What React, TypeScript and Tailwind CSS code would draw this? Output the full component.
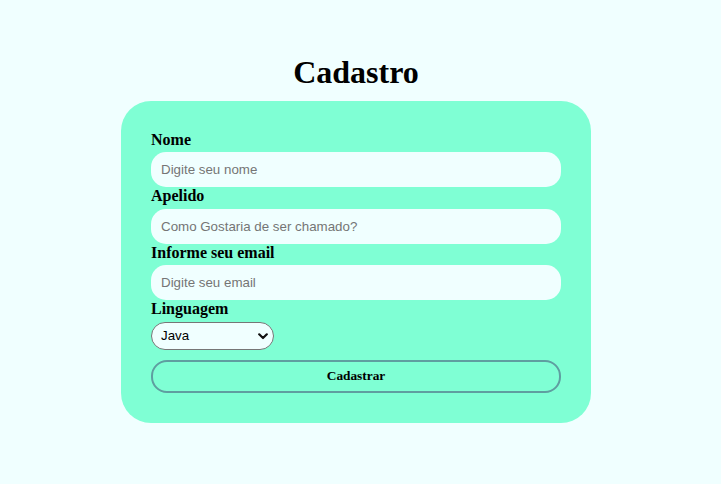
import React from "react";

export default function App() {
  return (
    <div className="min-h-[484px] w-full bg-[#f0ffff]" style={{ fontFamily: '"Liberation Serif", "Times New Roman", serif' }}>
      <div className="w-[712px] flex flex-col items-center pt-[54px]">
        <h1 className="text-[32px] font-bold leading-[37px] text-black">Cadastro</h1>
        <form
          className="mt-[10px] w-[470px] bg-[#7fffd4] rounded-[30px] px-[30px] pt-[30px] pb-[30px] flex flex-col"
          onSubmit={(e) => e.preventDefault()}
        >
          <label className="block text-[16px] font-bold leading-[18.4px] text-black">Nome</label>
          <input
            type="text"
            placeholder="Digite seu nome"
            className="mt-[3px] h-[35px] w-[410px] rounded-[15px] bg-[#f0ffff] px-[10px] text-[13.33px] text-black placeholder:text-[#757575] outline-none"
            style={{ fontFamily: '"Liberation Sans", Arial, sans-serif' }}
          />
          <label className="block text-[16px] font-bold leading-[18.4px] text-black">Apelido</label>
          <input
            type="text"
            placeholder="Como Gostaria de ser chamado?"
            className="mt-[3px] h-[35px] w-[410px] rounded-[15px] bg-[#f0ffff] px-[10px] text-[13.33px] text-black placeholder:text-[#757575] outline-none"
            style={{ fontFamily: '"Liberation Sans", Arial, sans-serif' }}
          />
          <label className="block text-[16px] font-bold leading-[18.4px] text-black">Informe seu email</label>
          <input
            type="email"
            placeholder="Digite seu email"
            className="mt-[3px] h-[35px] w-[410px] rounded-[15px] bg-[#f0ffff] px-[10px] text-[13.33px] text-black placeholder:text-[#757575] outline-none"
            style={{ fontFamily: '"Liberation Sans", Arial, sans-serif' }}
          />
          <label className="block text-[16px] font-bold leading-[18.4px] text-black">Linguagem</label>
          <div className="relative mt-[3px] h-[28px] w-[123px]">
            <select
              defaultValue="Java"
              className="h-[28px] w-[123px] appearance-none rounded-[15px] border border-[#767676] bg-[#f0ffff] pl-[9px] pr-[20px] text-[13.33px] text-black outline-none"
              style={{ fontFamily: '"Liberation Sans", Arial, sans-serif' }}
            >
              <option>Java</option>
              <option>Python</option>
              <option>JavaScript</option>
            </select>
            <svg
              className="pointer-events-none absolute right-[6px] top-[11px]"
              width="10"
              height="7"
              viewBox="0 0 10 7"
              fill="none"
            >
              <path d="M1.2 1.3 L5 5 L8.8 1.3" stroke="#111" strokeWidth="2.2" strokeLinecap="round" strokeLinejoin="round" />
            </svg>
          </div>
          <button
            type="submit"
            className="mt-[10px] h-[33px] w-[410px] rounded-[16px] border-2 border-[#5f9ea0] bg-transparent text-[13.33px] font-bold text-black"
            style={{ fontFamily: '"Liberation Serif", "Times New Roman", serif' }}
          >
            Cadastrar
          </button>
        </form>
      </div>
    </div>
  );
}
